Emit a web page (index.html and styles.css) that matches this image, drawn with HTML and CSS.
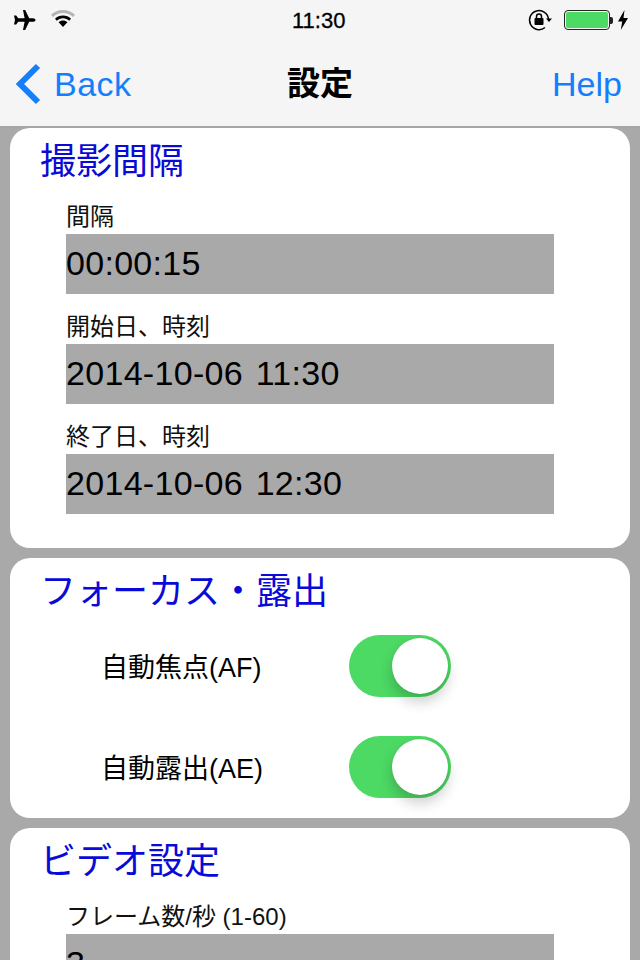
FILE: index.html
```html
<!DOCTYPE html>
<html lang="ja">
<head>
<meta charset="utf-8">
<title>設定</title>
<link rel="stylesheet" href="styles.css">
</head>
<body>
<div class="screen">
  <header class="topbar">
    <div class="status">
      <div class="status-side">
        <svg class="ico-plane" width="26" height="24" viewBox="0 0 26 24"><path fill="#000" d="M13 2h2.200l4 8.200h3.600c1.500 0 2.700.8 2.700 1.800s-1.200 1.800-2.700 1.800h-3.600l-4 8.200H13l1.600-8.200H8.200l-2 2.600H4l1-4.400-1-4.400h2.200l2 2.600h6.400z"/></svg>
        <svg class="ico-wifi" width="26" height="20" viewBox="0 0 26 20"><path fill="#b4b4b4" d="M13 1c4.600 0 8.800 1.800 12 4.800l-2 2.200C20.400 5.500 16.900 4 13 4S5.600 5.500 3 8L1 5.800C4.200 2.800 8.400 1 13 1z"/><path fill="#000" d="M13 6.500c3.100 0 5.900 1.200 8 3.200l-1.800 2C17.600 10.100 15.400 9.200 13 9.200s-4.600.9-6.200 2.500L5 9.700c2.100-2 4.900-3.200 8-3.200zM13 11.500c1.700 0 3.200.6 4.400 1.700L13 18l-4.400-4.800c1.200-1.100 2.700-1.700 4.400-1.700z"/></svg>
      </div>
      <span class="clock">11:30</span>
      <div class="status-side">
        <svg class="ico-lock" width="26" height="24" viewBox="0 0 26 24"><path fill="none" stroke="#000" stroke-width="1.500" d="M21.500 11.500A9.500 9.500 0 1 0 18 19.500"/><path fill="#000" d="M19 10.500h6l-3 3.500z"/><rect x="7.500" y="10" width="9" height="7" rx="1" fill="#000"/><path fill="none" stroke="#000" stroke-width="1.500" d="M9.500 10V8.500a2.500 2.500 0 0 1 5 0V10"/></svg>
        <div class="battery"><div class="battery-fill"></div></div>
        <span class="battery-tip"></span>
        <svg class="ico-bolt" width="12" height="20" viewBox="0 0 12 20"><path fill="#000" d="M7.500 0 1 11.500h4.200L3.800 20 11 8H6.500z"/></svg>
      </div>
    </div>
    <nav class="nav">
      <a class="nav-back">
        <svg width="28" height="42" viewBox="0 0 28 42"><path fill="none" stroke="#157efb" stroke-width="6" d="M23 3 5 21l18 18"/></svg>
        <span>Back</span>
      </a>
      <h1 class="nav-title">設定</h1>
      <a class="nav-help">Help</a>
    </nav>
  </header>
  <main class="content">
    <section class="card card-interval">
      <h2 class="card-title">撮影間隔</h2>
      <div class="field"><label class="field-label">間隔</label><div class="field-value">00:00:15</div></div>
      <div class="field"><label class="field-label">開始日、時刻</label><div class="field-value">2014-10-06 11:30</div></div>
      <div class="field"><label class="field-label">終了日、時刻</label><div class="field-value">2014-10-06 12:30</div></div>
    </section>
    <section class="card card-focus">
      <h2 class="card-title">フォーカス・露出</h2>
      <div class="switch-row"><span class="switch-label">自動焦点(AF)</span><span class="switch"><span class="knob"></span></span></div>
      <div class="switch-row"><span class="switch-label">自動露出(AE)</span><span class="switch"><span class="knob"></span></span></div>
    </section>
    <section class="card card-video">
      <h2 class="card-title">ビデオ設定</h2>
      <div class="field"><label class="field-label">フレーム数/秒 (1-60)</label><div class="field-value">3</div></div>
    </section>
  </main>
</div>
</body>
</html>
```
FILE: styles.css
```css
* { box-sizing: border-box; }
html, body { margin: 0; padding: 0; }
body { font-family: "Liberation Sans", "Noto Sans CJK JP", sans-serif; background: #a9a9a9; }
.screen { width: 640px; height: 960px; overflow: hidden; background: #a9a9a9; }
.topbar { height: 128px; background: #f5f5f5; border-bottom: 2px solid #a6a6a6; }
.status { height: 40px; display: flex; align-items: center; justify-content: space-between; padding: 0 11px 0 10px; position: relative; }
.status-side { display: flex; align-items: center; }
.ico-wifi { margin-left: 14px; margin-top: -2px; }
.ico-lock { margin-right: 11px; }
.clock { position: absolute; left: 292px; top: 8px; font-size: 22px; line-height: 26px; color: #000; -webkit-text-stroke: .3px #000; }
.battery { width: 46px; height: 20px; border: 1.500px solid #222; border-radius: 4px; padding: 1px; background: #f5f5f5; }
.battery-fill { width: 100%; height: 100%; background: #4cd964; border-radius: 2px; }
.battery-tip { width: 3px; height: 7px; background: #222; border-radius: 0 2px 2px 0; margin-right: 4px; }
.nav { height: 86px; display: flex; align-items: center; justify-content: space-between; padding: 2px 18px 0 15px; position: relative; }
.nav-back { display: flex; align-items: center; gap: 11px; color: #157efb; font-size: 34px; letter-spacing: .5px; }
.nav-help { color: #157efb; font-size: 34px; }
.nav-title { position: absolute; left: 0; right: 0; top: 21px; margin: 0; text-align: center; font-size: 33px; line-height: 46px; font-weight: 700; color: #000; }
.content { padding: 0 10px; display: flex; flex-direction: column; gap: 10px; }
.card { background: #fff; border-radius: 20px; padding: 10px 0 0 30px; }
.card-interval { height: 420px; }
.card-focus { height: 260px; }
.card-video { height: 200px; }
.card-title { margin: 0 0 -2px; font-size: 36px; line-height: 48px; font-weight: 400; color: #0a0ad8; }
.field { margin-left: 26px; width: 488px; }
.field-label { display: block; height: 50px; font-size: 24px; line-height: 34px; padding-top: 16px; color: #111; }
.field-value { height: 60px; background: #a9a9a9; font-size: 34px; line-height: 58px; letter-spacing: .3px; word-spacing: 3px; color: #000; }
.switch-row { display: flex; align-items: center; height: 101px; padding-left: 61px; }
.switch-label { width: 248px; font-size: 27px; color: #000; }
.switch { width: 102px; height: 62px; margin-top: 1px; background: #4cd964; border-radius: 31px; position: relative; flex: none; }
.knob { position: absolute; right: 3px; top: 3px; width: 56px; height: 56px; border-radius: 50%; background: #fff; box-shadow: 0 8px 14px rgba(0,0,0,.2), 0 0 1px rgba(0,0,0,.2); }
.card-focus .card-title { margin-bottom: -1px; }
```
